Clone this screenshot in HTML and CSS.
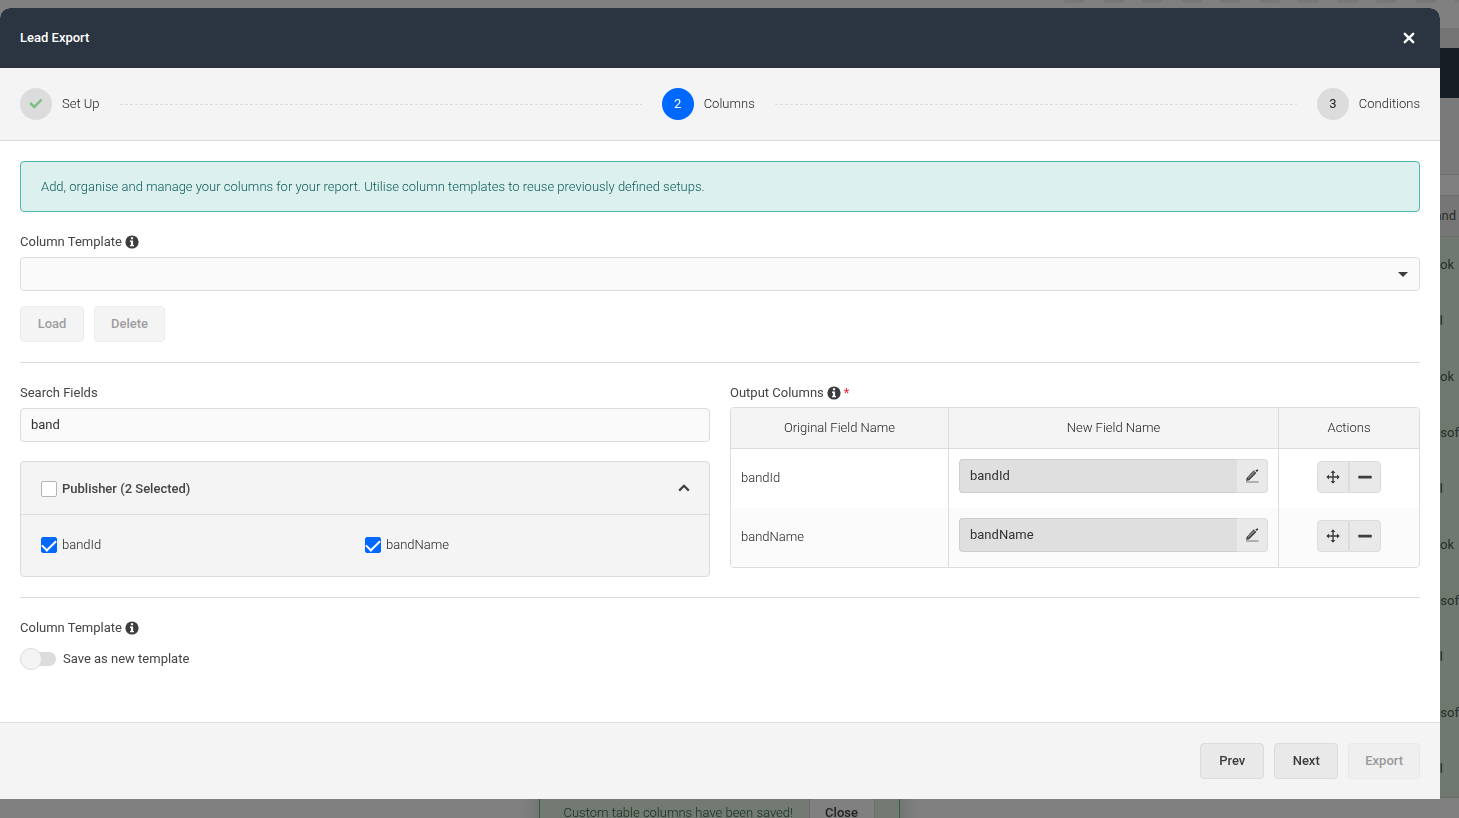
FILE: index.html
```
<!DOCTYPE html>
<html lang="en">
<head>
    <meta charset="UTF-8">
    <meta name="viewport" content="width=device-width, initial-scale=1.0">
    <title>Lead Export</title>
    <link rel="stylesheet" href="styles.css">
</head>
<body>
    <!-- shared icons -->
    <svg class="sprite" aria-hidden="true">
        <symbol id="icon-info" viewBox="0 0 14 14">
            <circle cx="7" cy="7" r="6.6" fill="#3d3d3d"/>
            <path d="M5.9 2.3h2.2v1.9H5.9zM5 5.6h3.1v4.3H9v1.3H5V9.9h.9V6.9H5z" fill="#fff"/>
        </symbol>
        <symbol id="icon-edit" viewBox="0 0 14 14">
            <path d="M2.2 9.2 9.6 1.8l2.4 2.4-7.2 7.2-3 .7z" transform="translate(-.6 -.2)" fill="#444"/>
            <path d="M4.6 5.4 8.6 1.5l1 .9M3.2 9.2l6.2-6" stroke="#e9e9e9" stroke-width=".7" fill="none"/>
            <path d="M4.4 5.6 8.4 1.6l1.2.6" stroke="#777" stroke-width=".6" fill="none"/>
            <path d="M10.4 1.5 12.4.3l.9.9-1.4 1.7z" fill="#333"/>
            <path d="M1 13h12.6" stroke="#777" stroke-width="1"/>
        </symbol>
        <symbol id="icon-move" viewBox="0 0 14 14">
            <path d="M7 1.5v11M1.5 7h11" stroke="#3d3d3d" stroke-width="1.4"/>
            <path d="M7 .3 9.4 3H4.6zM7 13.7 4.6 11h4.8zM.3 7 3 4.6v4.8zM13.7 7 11 9.4V4.6z" fill="#3d3d3d"/>
        </symbol>
        <symbol id="icon-minus" viewBox="0 0 14 14">
            <rect x="0.3" y="5.8" width="13.4" height="2.6" rx=".5" fill="#3d3d3d"/>
        </symbol>
    </svg>

    <div class="page">
        <div class="page-tabs">
            <span></span><span></span><span></span><span></span><span></span><span></span><span></span><span></span><span></span><span></span><span></span>
        </div>
        <div class="page-bar"></div>
        <div class="page-nav"></div>
        <div class="page-title"></div>
        <div class="page-filter"></div>
        <div class="page-list">
            <div class="list-head">and</div>
            <div class="list-row">ok</div>
            <div class="list-row short">l</div>
            <div class="list-row">ok</div>
            <div class="list-row long">osof</div>
            <div class="list-row short">l</div>
            <div class="list-row">ok</div>
            <div class="list-row long">osof</div>
            <div class="list-row short">l</div>
            <div class="list-row long">osof</div>
            <div class="list-row short">l</div>
        </div>
    </div>

    <div class="overlay">
        <div class="toast">
            <span class="toast-text">Custom table columns have been saved!</span>
            <button type="button" class="toast-close">Close</button>
        </div>

        <div class="modal" role="dialog" aria-labelledby="modal-title">
            <header class="modal-header">
                <h1 id="modal-title">Lead Export</h1>
                <button type="button" class="close" aria-label="Close dialog">
                    <svg width="12" height="12" viewBox="0 0 12 12"><path d="M1.8 1.8l8.4 8.4M10.2 1.8l-8.4 8.4" stroke="#fff" stroke-width="2.4" stroke-linecap="round"/></svg>
                </button>
            </header>

            <div class="steps">
                <div class="step">
                    <span class="step-dot">
                        <svg width="14" height="12" viewBox="0 0 14 12"><path d="M1.2 5 5.2 9 12.6 1.6" fill="none" stroke="#7cc184" stroke-width="2.5"/></svg>
                    </span>
                    <span>Set Up</span>
                </div>
                <div class="step-line"></div>
                <div class="step">
                    <span class="step-dot active">2</span>
                    <span>Columns</span>
                </div>
                <div class="step-line"></div>
                <div class="step">
                    <span class="step-dot">3</span>
                    <span>Conditions</span>
                </div>
            </div>

            <main class="modal-body">
                <div class="alert">Add, organise and manage your columns for your report. Utilise column templates to reuse previously defined setups.</div>

                <label class="field-label" for="template">Column Template <svg class="info"><use href="#icon-info"/></svg></label>
                <div class="select-wrap">
                    <select id="template" class="control">
                        <option></option>
                    </select>
                </div>
                <div class="buttons">
                    <button type="button" class="btn" disabled>Load</button>
                    <button type="button" class="btn" disabled>Delete</button>
                </div>

                <hr>

                <div class="columns">
                    <section>
                        <label class="field-label" for="search">Search Fields</label>
                        <input type="text" id="search" class="control" value="band">

                        <div class="panel">
                            <div class="panel-head">
                                <label class="check"><input type="checkbox"> Publisher (2 Selected)</label>
                                <button type="button" class="collapse" aria-label="Collapse">
                                    <svg width="12" height="8" viewBox="0 0 12 8"><path d="M1.2 6.6 6 1.8l4.8 4.8" fill="none" stroke="#3d3d3d" stroke-width="2.2"/></svg>
                                </button>
                            </div>
                            <div class="panel-body">
                                <label class="check"><input type="checkbox" checked> bandId</label>
                                <label class="check"><input type="checkbox" checked> bandName</label>
                            </div>
                        </div>
                    </section>

                    <section>
                        <div class="field-label table-label">Output Columns <svg class="info"><use href="#icon-info"/></svg> <span class="required">*</span></div>
                        <table class="output">
                            <thead>
                                <tr>
                                    <th class="col-original">Original Field Name</th>
                                    <th>New Field Name</th>
                                    <th class="col-actions">Actions</th>
                                </tr>
                            </thead>
                            <tbody>
                                <tr>
                                    <td>bandId</td>
                                    <td>
                                        <div class="rename">
                                            <input type="text" value="bandId" aria-label="New name for bandId" readonly>
                                            <button type="button" aria-label="Edit bandId"><svg width="14" height="14"><use href="#icon-edit"/></svg></button>
                                        </div>
                                    </td>
                                    <td>
                                        <div class="actions">
                                            <button type="button" aria-label="Move bandId"><svg width="14" height="14"><use href="#icon-move"/></svg></button>
                                            <button type="button" aria-label="Remove bandId"><svg width="14" height="14"><use href="#icon-minus"/></svg></button>
                                        </div>
                                    </td>
                                </tr>
                                <tr>
                                    <td>bandName</td>
                                    <td>
                                        <div class="rename">
                                            <input type="text" value="bandName" aria-label="New name for bandName" readonly>
                                            <button type="button" aria-label="Edit bandName"><svg width="14" height="14"><use href="#icon-edit"/></svg></button>
                                        </div>
                                    </td>
                                    <td>
                                        <div class="actions">
                                            <button type="button" aria-label="Move bandName"><svg width="14" height="14"><use href="#icon-move"/></svg></button>
                                            <button type="button" aria-label="Remove bandName"><svg width="14" height="14"><use href="#icon-minus"/></svg></button>
                                        </div>
                                    </td>
                                </tr>
                            </tbody>
                        </table>
                    </section>
                </div>

                <hr>

                <div class="field-label">Column Template <svg class="info"><use href="#icon-info"/></svg></div>
                <label class="toggle">
                    <input type="checkbox">
                    Save as new template
                </label>
            </main>

            <footer class="modal-footer">
                <button type="button" class="btn">Prev</button>
                <button type="button" class="btn">Next</button>
                <button type="button" class="btn" disabled>Export</button>
            </footer>
        </div>
    </div>
</body>
</html>
```

FILE: styles.css
```
* {
    box-sizing: border-box;
}
body {
    margin: 0;
    height: 100vh;
    overflow: hidden;
    background: #808080;
    color: #444;
    font-family: Roboto, "Liberation Sans", sans-serif;
    font-size: 13px;
    line-height: 20px;
}
button, input, select {
    font: inherit;
    color: inherit;
}
button {
    cursor: pointer;
}
.sprite {
    position: absolute;
    width: 0;
    height: 0;
}

/* dimmed page behind the dialog */
.page {
    height: 100vh;
    overflow: hidden;
}
.page-tabs {
    display: flex;
    justify-content: flex-end;
    gap: 18px;
    height: 28px;
    overflow: hidden;
}
.page-tabs span {
    flex: none;
    width: 21px;
    height: 3px;
    border-radius: 0 0 3px 3px;
    background: #787878;
}
.page-tabs span:last-child {
    width: 5px;
}
.page-bar {
    height: 20px;
    background: #757575;
}
.page-nav {
    height: 50px;
    background: #171d25;
}
.page-title {
    height: 77px;
    background: #7a7a7a;
    border-bottom: 1px solid #6c6c6c;
}
.page-filter {
    height: 21px;
    border-bottom: 1px solid #6c6c6c;
}
.page-list {
    color: #2a2d2a;
    border-bottom: 1px solid #6a6a6a;
}
.list-head, .list-row {
    display: flex;
    align-items: center;
    justify-content: flex-end;
    height: 56px;
    padding-right: 5px;
    background: #6f796f;
}
.list-head {
    height: 41px;
    padding-right: 3px;
    background: #767676;
    border-bottom: 1px solid #6e6e6e;
}
.list-row.short {
    padding-right: 16px;
}
.list-row.long {
    padding-right: 0;
}

/* dialog */
.overlay {
    position: fixed;
    inset: 0;
    padding: 8px 19px 19px 0;
    overflow: hidden;
}
.modal {
    position: relative;
    display: flex;
    flex-direction: column;
    min-height: 100%;
    background: #fff;
    border-radius: 10px 10px 0 0;
    overflow: hidden;
}
.modal-header {
    display: flex;
    justify-content: space-between;
    align-items: center;
    height: 60px;
    padding: 0 20px;
    background: #2a3541;
    color: #fff;
}
.modal-header h1 {
    margin: 0;
    font-size: 13px;
    font-weight: 500;
}
.close, .collapse {
    display: flex;
    align-items: center;
    justify-content: center;
    width: 22px;
    height: 22px;
    padding: 0;
    border: none;
    background: none;
}

.steps {
    display: flex;
    align-items: center;
    gap: 20px;
    padding: 20px;
    background: #f4f4f4;
    border-bottom: 1px solid #dcdcdc;
}
.step {
    display: flex;
    align-items: center;
    gap: 10px;
}
.step-dot {
    display: flex;
    align-items: center;
    justify-content: center;
    width: 32px;
    height: 32px;
    border-radius: 50%;
    background: #dcdcdc;
    font-weight: 400;
}
.step-dot.active {
    background: #0068ff;
    color: #fff;
}
.step-line {
    flex: 1;
    height: 1px;
    background: repeating-linear-gradient(90deg, #dcdcdc 0 3px, transparent 3px 5px);
}

.modal-body {
    flex: 1;
    padding: 20px;
}
.alert {
    padding: 15px 20px;
    line-height: 19px;
    margin-bottom: 20px;
    border: 1px solid #4db6b1;
    border-radius: 4px;
    background: #dcf0ee;
    color: #0a5a59;
}
.steps, .alert, .output, .panel-body, .toast {
    font-weight: 300;
}
.steps, .output, .panel-body {
    color: #222;
}
.field-label {
    display: flex;
    align-items: center;
    gap: 3px;
    height: 20px;
    margin-bottom: 5px;
}
.table-label {
    margin-bottom: 4px;
}
.info {
    width: 14px;
    height: 14px;
}
.required {
    color: #f5222d;
}
.control {
    display: block;
    width: 100%;
    height: 34px;
    padding: 0 10px 2px;
    border: 1px solid #dcdcdc;
    border-radius: 4px;
    background: #fafafa;
    color: #333;
    appearance: none;
}
.select-wrap {
    display: grid;
    align-items: center;
}
.select-wrap > *, .select-wrap::after {
    grid-area: 1 / 1;
}
/* drop-down arrow */
.select-wrap::after {
    content: "";
    justify-self: end;
    margin-right: 12px;
    border: 5px solid transparent;
    border-top-color: #3d3d3d;
    border-bottom: none;
    pointer-events: none;
}
.buttons {
    display: flex;
    gap: 10px;
    margin-top: 15px;
}
.btn {
    min-width: 64px;
    height: 36px;
    padding: 0 16px;
    border: 1px solid #dcdcdc;
    border-radius: 4px;
    background: #e9e9e9;
    color: #3d3d3d;
    font-weight: 500;
}
.btn:disabled {
    opacity: 0.5;
    cursor: default;
}
hr {
    height: 1px;
    margin: 20px 0;
    border: none;
    background: #dcdcdc;
}

.columns {
    display: grid;
    grid-template-columns: 1fr 1fr;
    gap: 20px;
}
.panel {
    margin-top: 19px;
    border: 1px solid #dcdcdc;
    border-radius: 4px;
    background: #f4f4f4;
}
.panel-head {
    display: flex;
    align-items: center;
    justify-content: space-between;
    height: 53px;
    padding: 0 14px 0 20px;
    border-bottom: 1px solid #dcdcdc;
    font-weight: 500;
}
.panel-head .check {
    padding-top: 2px;
}
.panel-body {
    display: grid;
    grid-template-columns: 1fr 1fr;
    padding: 20px;
}
.check {
    display: flex;
    align-items: center;
    gap: 5px;
    height: 20px;
    margin-bottom: 1px;
}
.check input {
    display: grid;
    justify-items: center;
    width: 16px;
    height: 16px;
    margin: 0;
    border: 1px solid #b4b4b4;
    border-radius: 2px;
    background: #fff;
    appearance: none;
}
.check input:checked {
    border-color: #0068ff;
    background: #0068ff;
}
.check input:checked::before {
    content: "";
    width: 12px;
    height: 6px;
    margin-top: 2px;
    border: solid #fff;
    border-width: 0 0 2px 2px;
    transform: rotate(-45deg);
}

.output {
    width: 100%;
    table-layout: fixed;
    border: 1px solid #dcdcdc;
    border-radius: 4px;
    border-spacing: 0;
    overflow: hidden;
}
.output th, .output td {
    padding: 0 10px;
    border-right: 1px solid #dcdcdc;
    font-weight: inherit;
}
.output th:last-child, .output td:last-child {
    border-right: none;
}
.output th {
    height: 41px;
    background: #f4f4f4;
    border-bottom: 1px solid #dcdcdc;
}
.output td {
    height: 59px;
    padding-bottom: 2px;
}
.output tbody tr:nth-child(even) {
    background: #fbfbfb;
}
.col-original {
    width: 218px;
}
.col-actions {
    width: 140px;
}
.rename {
    display: flex;
    height: 34px;
    margin-bottom: 3px;
}
.rename input {
    flex: 1;
    min-width: 0;
    padding: 0 10px;
    border: 1px solid #cecece;
    border-right: none;
    border-radius: 4px 0 0 4px;
    background: #dfdfdf;
    color: #333;
    font-weight: 400;
}
.rename button, .actions button {
    display: flex;
    align-items: center;
    justify-content: center;
    width: 32px;
    padding: 0;
    border: 1px solid #dcdcdc;
    background: #e9e9e9;
}
.rename button {
    width: 31px;
    border-left: none;
    border-radius: 0 4px 4px 0;
}
.actions {
    display: flex;
    justify-content: center;
    height: 32px;
    margin-bottom: 1px;
}
.actions button:first-child {
    border-radius: 4px 0 0 4px;
}
.actions button:last-child {
    border-radius: 0 4px 4px 0;
}

.toggle {
    display: inline-flex;
    align-items: center;
    gap: 7px;
    margin-top: 6px;
}
.toggle input {
    display: flex;
    align-items: center;
    width: 36px;
    height: 14px;
    margin: 0;
    border-radius: 7px;
    background: #dcdcdc;
    appearance: none;
}
.toggle input::before {
    content: "";
    width: 20px;
    height: 20px;
    flex: none;
    border: 1px solid #dcdcdc;
    border-radius: 50%;
    background: #f4f4f4;
}
.toggle input:checked {
    justify-content: flex-end;
    background: #0068ff;
}

.modal-footer {
    display: flex;
    justify-content: flex-end;
    gap: 10px;
    padding: 20px;
    background: #f4f4f4;
    border-top: 1px solid #dcdcdc;
}

/* notification peeking out under the dialog */
.toast {
    position: absolute;
    left: calc(50% - 191px);
    bottom: -17px;
    display: flex;
    width: 361px;
    height: 45px;
    padding-right: 24px;
    border: 1px solid #2f6438;
    background: #737a73;
    color: #12331a;
    box-shadow: 0 0 20px rgba(0, 0, 0, 0.2);
    line-height: 43px;
}
.toast-text {
    flex: 1;
    padding-left: 24px;
    white-space: nowrap;
}
.toast-close {
    width: 66px;
    padding: 0;
    border: solid #6e6e6e;
    border-width: 0 1px;
    background: #808080;
    color: #222;
    font-weight: 500;
}
```
